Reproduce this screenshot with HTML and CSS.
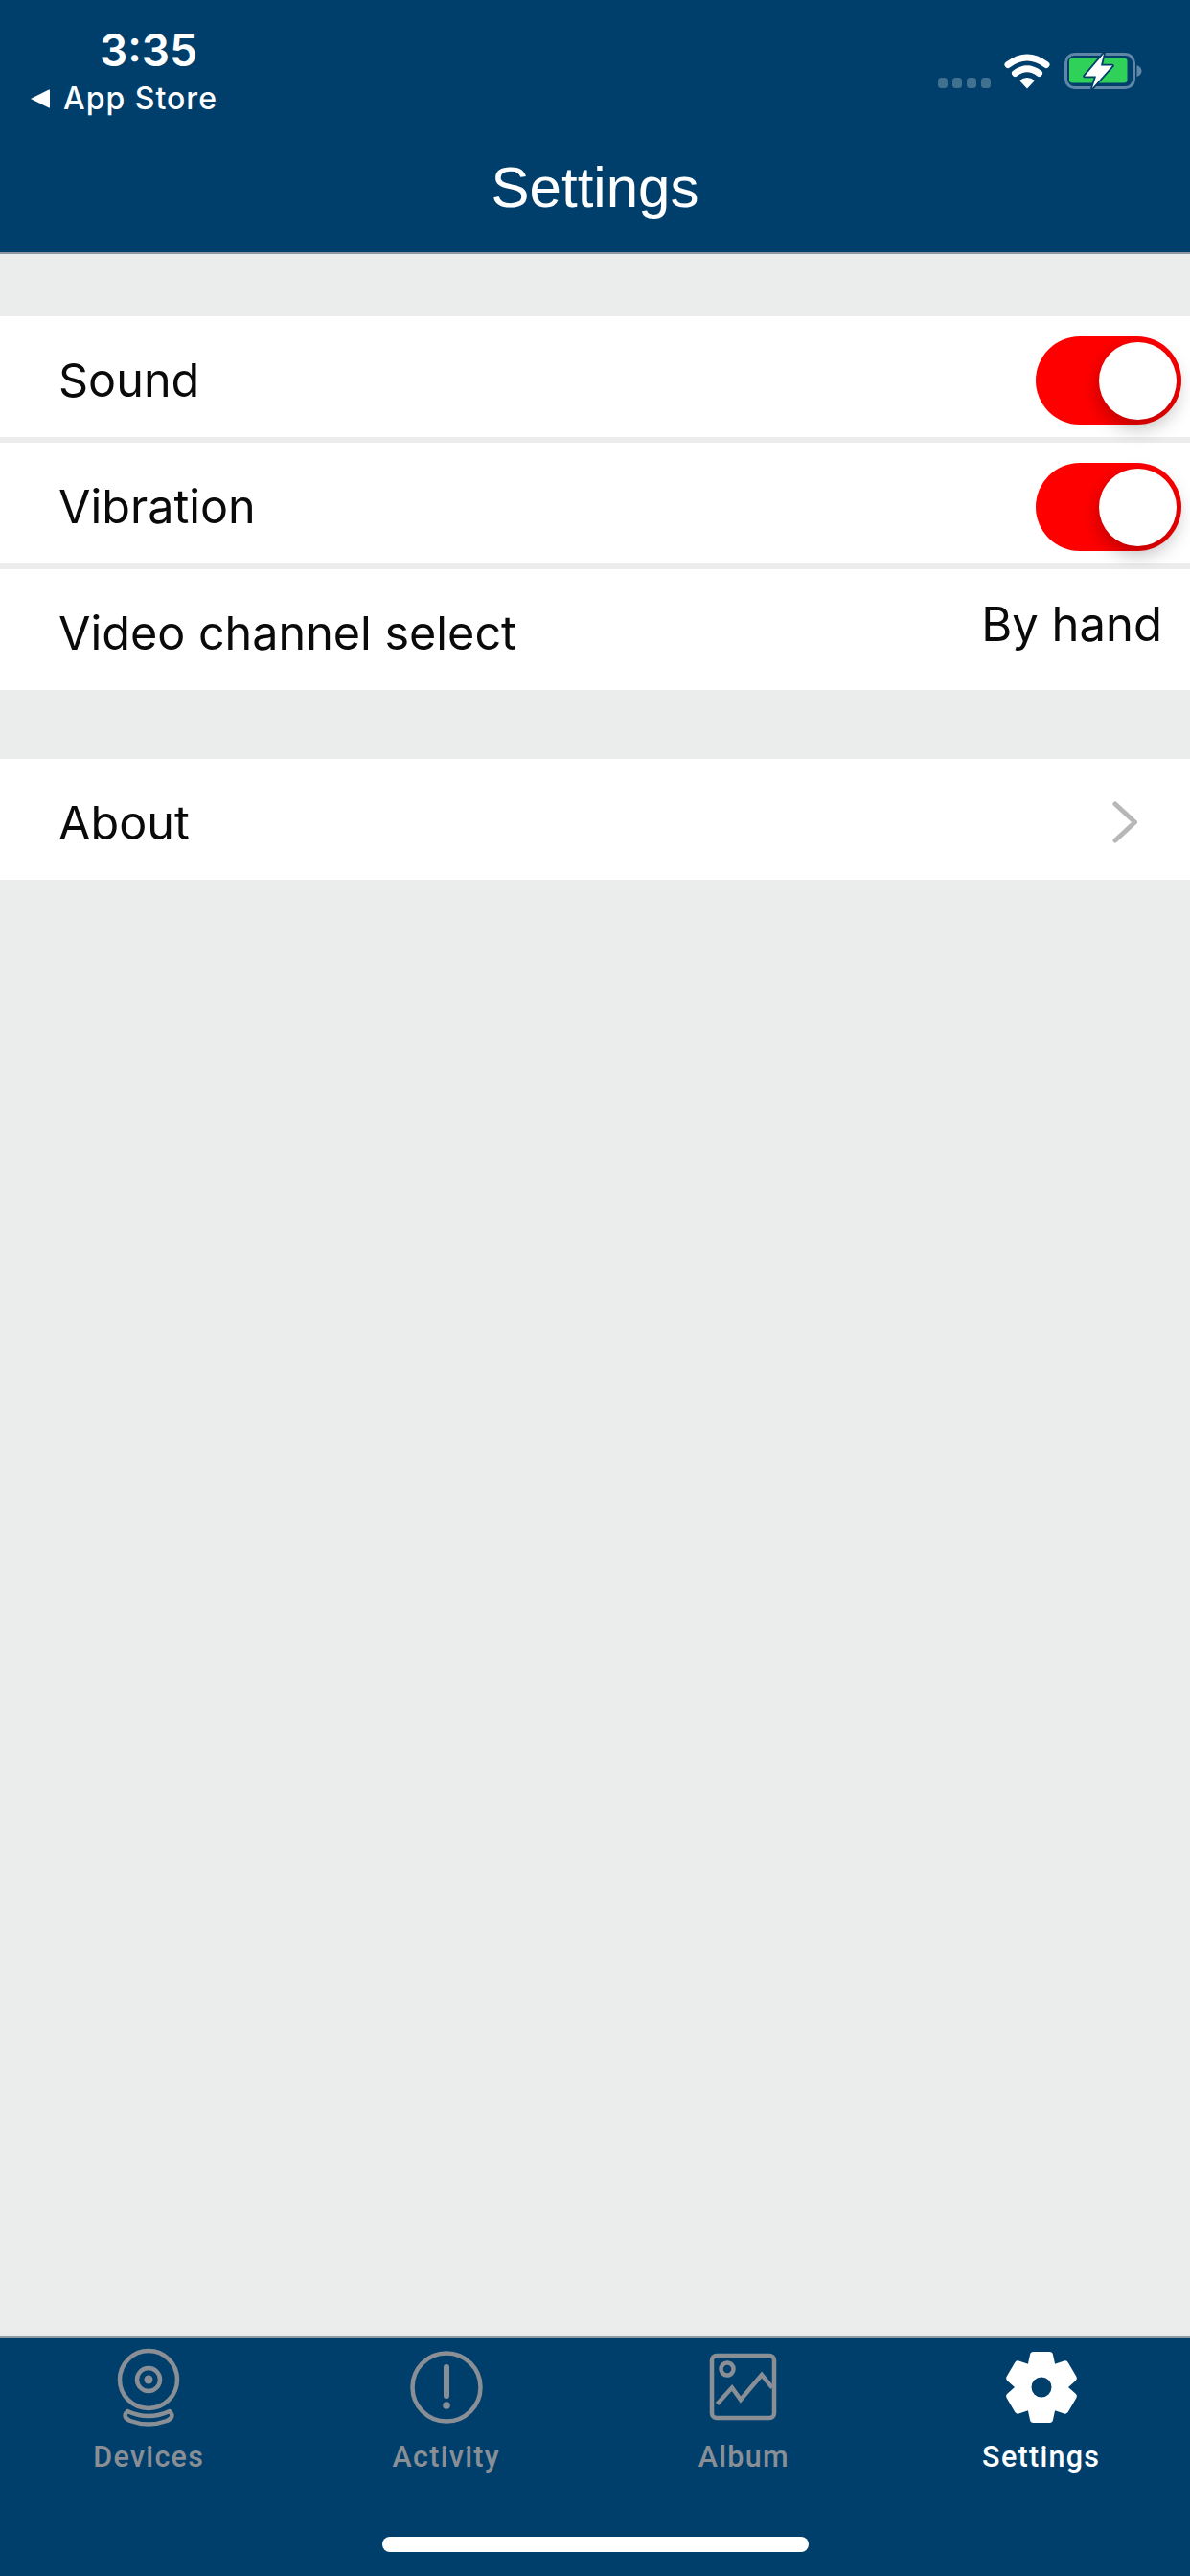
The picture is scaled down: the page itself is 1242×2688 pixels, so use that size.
FILE: index.html
```html
<!DOCTYPE html>
<html lang="en">
<head>
<meta charset="utf-8">
<title>Settings</title>
<link rel="stylesheet" href="styles.css">
</head>
<body>
<div class="screen">
  <header class="topbar">
    <div class="status">
      <div class="status-left">
        <div class="time">3:35</div>
        <div class="back">
          <svg class="back-arrow" width="22" height="22" viewBox="0 0 22 22"><path d="M1 11 L20 1.5 Q21 1 21 2.5 V19.5 Q21 21 20 20.5 Z" fill="#fff"/></svg>
          <span>App Store</span>
        </div>
      </div>
      <div class="status-right">
        <div class="signal"><i></i><i></i><i></i><i></i></div>
        <svg class="wifi" width="48" height="37" viewBox="0 0 48 37">
          <g fill="none" stroke="#fff" stroke-width="7" stroke-linecap="round">
            <path d="M4 11.5 Q24 -3.5 44 11.5"/>
            <path d="M11.5 20.5 Q24 11 36.500 20.500"/>
          </g>
          <path d="M16 28 Q24 22 32 28 L24 36.500 Z" fill="#fff"/>
        </svg>
        <svg class="battery" width="81" height="38" viewBox="0 0 81 38">
          <rect x="1.500" y="1.500" width="71" height="35" rx="9" fill="none" stroke="#5f86a6" stroke-width="3"/>
          <path d="M75.500 13 Q80.500 15 80.500 19 Q80.500 23 75.500 25 Z" fill="#5f86a6"/>
          <rect x="5" y="5.500" width="60.500" height="26" rx="3.500" fill="#30d158"/>
          <path d="M41 1 L21 24.500 H33 L29 37 L50 13.500 H38 Z" fill="#fff" stroke="#003f6b" stroke-width="3.500" paint-order="stroke" stroke-linejoin="round"/>
        </svg>
      </div>
    </div>
    <h1 class="title">Settings</h1>
  </header>

  <main class="content">
    <section class="group">
      <div class="row">
        <span class="label">Sound</span>
        <div class="toggle"><div class="knob"></div></div>
      </div>
      <div class="row">
        <span class="label">Vibration</span>
        <div class="toggle"><div class="knob"></div></div>
      </div>
      <div class="row">
        <span class="label">Video channel select</span>
        <span class="value">By hand</span>
      </div>
    </section>
    <section class="group">
      <div class="row">
        <span class="label">About</span>
        <svg class="chevron" width="26" height="44" viewBox="0 0 26 44"><path d="M3 3 L23.500 22 L3 41" fill="none" stroke="#b7b7b7" stroke-width="5" stroke-linecap="round" stroke-linejoin="miter"/></svg>
      </div>
    </section>
  </main>

  <nav class="tabbar">
    <div class="tabs">
      <div class="tab">
        <div class="tab-icon">
          <svg width="82" height="82" viewBox="0 0 82 82">
            <g fill="none" stroke="#8a8f96" stroke-width="4.500">
              <circle cx="41" cy="33" r="30"/>
              <circle cx="41" cy="33" r="12"/>
              <path d="M19 66 Q41 76 63 66 Q69 72 60 76 Q41 83 22 76 Q13 72 19 66 Z" stroke-linejoin="round"/>
            </g>
            <circle cx="41" cy="33" r="4.500" fill="#8a8f96"/>
          </svg>
        </div>
        <span class="tab-label">Devices</span>
      </div>
      <div class="tab">
        <div class="tab-icon">
          <svg width="82" height="82" viewBox="0 0 82 82">
            <circle cx="41" cy="41" r="35.500" fill="none" stroke="#8a8f96" stroke-width="4.500"/>
            <path d="M41 20 V50" fill="none" stroke="#8a8f96" stroke-width="6" stroke-linecap="round"/>
            <circle cx="41" cy="60" r="3.800" fill="#8a8f96"/>
          </svg>
        </div>
        <span class="tab-label">Activity</span>
      </div>
      <div class="tab">
        <div class="tab-icon">
          <svg width="82" height="82" viewBox="0 0 82 82">
            <g fill="none" stroke="#8a8f96" stroke-width="4.500">
              <rect x="8" y="8" width="65" height="65" rx="5"/>
              <circle cx="24" cy="22" r="6.500"/>
              <path d="M13.500 58.500 L29 41.500 L38 54 L60 28 L71 41.500"/>
            </g>
          </svg>
        </div>
        <span class="tab-label">Album</span>
      </div>
      <div class="tab tab-active">
        <div class="tab-icon">
          <svg width="82" height="82" viewBox="-41 -41 82 82">
            <defs>
              <path id="tooth" d="M-11 -22 L-8.500 -33.500 H8.500 L11 -22 Z" fill="#fff" stroke="#fff" stroke-width="7" stroke-linejoin="round"/>
            </defs>
            <use href="#tooth"/>
            <use href="#tooth" transform="rotate(60)"/>
            <use href="#tooth" transform="rotate(120)"/>
            <use href="#tooth" transform="rotate(180)"/>
            <use href="#tooth" transform="rotate(240)"/>
            <use href="#tooth" transform="rotate(300)"/>
            <circle r="18.500" fill="none" stroke="#fff" stroke-width="16"/>
          </svg>
        </div>
        <span class="tab-label">Settings</span>
      </div>
    </div>
    <div class="home-indicator"></div>
  </nav>
</div>
</body>
</html>
```

FILE: styles.css
```css
* { box-sizing: border-box; }

html, body {
  margin: 0;
  padding: 0;
}

body {
  width: 1242px;
  height: 2688px;
  overflow: hidden;
  font-family: "Inter", "Liberation Sans", sans-serif;
}

.screen {
  width: 1242px;
  height: 2688px;
  display: flex;
  flex-direction: column;
  background: #ebeded;
}

/* Header */
.topbar {
  height: 265px;
  flex: none;
  background: #003f6b;
  border-bottom: 2px solid #8a98a4;
  color: #fff;
  padding-top: 26px;
}

.status {
  height: 98px;
  display: flex;
  justify-content: space-between;
}

.status-left {
  width: 280px;
  padding-left: 31px;
  display: flex;
  flex-direction: column;
}

.time {
  width: 248px;
  text-align: center;
  font-family: "Inter", sans-serif;
  font-weight: 600;
  font-size: 46px;
  line-height: 52px;
}

.back {
  display: flex;
  align-items: center;
  gap: 13px;
  margin-top: 7px;
  font-family: "Inter", sans-serif;
  font-weight: 500;
  font-size: 32px;
  line-height: 36px;
  letter-spacing: 1px;
}

.status-right {
  display: flex;
  align-items: flex-start;
  padding-right: 50px;
  padding-top: 29px;
}

.signal {
  display: flex;
  gap: 4.500px;
  margin-top: 26px;
  margin-right: 14px;
}

.signal i {
  display: block;
  width: 10.500px;
  height: 10.500px;
  border-radius: 3.500px;
  background: #42708f;
}

.wifi { margin-top: 1px; }

.battery { margin-left: 15px; }

.title {
  margin: 0;
  padding-top: 37px;
  text-align: center;
  font-family: "Liberation Sans", Arial, sans-serif;
  font-weight: 400;
  font-size: 60px;
  line-height: 70px;
}

/* List */
.content {
  flex: 1;
  padding-top: 65px;
  display: flex;
  flex-direction: column;
  gap: 72px;
}

.group {
  display: flex;
  flex-direction: column;
  gap: 6px;
  background: #ececec;
}

.row {
  height: 126px;
  background: #fff;
  display: flex;
  align-items: center;
  justify-content: space-between;
  padding-left: 61px;
  padding-right: 9px;
}

.label {
  font-size: 48.500px;
  line-height: 60px;
  color: #0a0a0a;
  padding-top: 8px;
}

.value {
  font-size: 49px;
  line-height: 60px;
  color: #0a0a0a;
  padding-right: 20px;
  margin-top: -10px;
}

.toggle {
  position: relative;
  width: 152px;
  height: 92px;
  margin-top: 8px;
  border-radius: 46px;
  background: #ff0000;
  display: flex;
  justify-content: flex-end;
  align-items: center;
  padding-right: 5px;
}

.knob {
  width: 81px;
  height: 81px;
  border-radius: 50%;
  background: #fff;
  box-shadow: 0 8px 20px rgba(0, 0, 0, 0.28);
}

.chevron {
  margin-top: 6px;
  margin-right: 46px;
}

/* Tab bar */
.tabbar {
  height: 250px;
  flex: none;
  background: #003f6b;
  border-top: 2px solid #8f9aa3;
  display: flex;
  flex-direction: column;
  align-items: center;
}

.tabs {
  width: 100%;
  display: flex;
  padding-top: 10px;
}

.tab {
  flex: 1;
  display: flex;
  flex-direction: column;
  align-items: center;
  color: #8a8f96;
}

.tab-active { color: #fff; }

.tab-icon {
  width: 82px;
  height: 82px;
}

.tab-icon svg { display: block; }

.tab-label {
  margin-top: 14px;
  font-family: "Roboto", sans-serif;
  font-weight: 500;
  font-size: 30.500px;
  line-height: 36px;
  letter-spacing: 1.300px;
}

.home-indicator {
  width: 445px;
  height: 16px;
  margin-top: 65px;
  border-radius: 8px;
  background: #fff;
}
```
